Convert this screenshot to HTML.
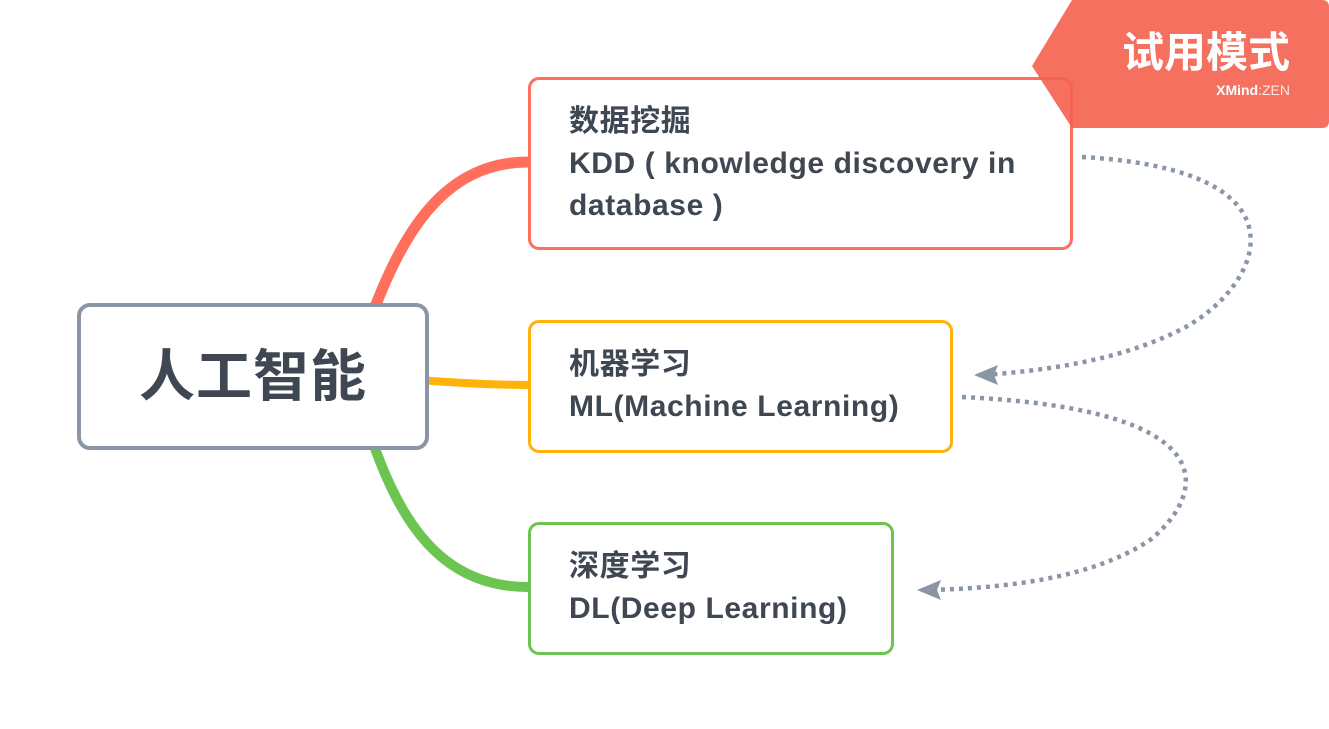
<!DOCTYPE html>
<html><head><meta charset="utf-8"><style>
body{margin:0;width:1329px;height:729px;background:#fff;position:relative;overflow:hidden;font-family:"Liberation Sans","Noto Sans CJK SC",sans-serif;}
.box{position:absolute;box-sizing:border-box;background:#fff;border-radius:11px;color:#3f4752;font-weight:bold;}
.t{position:absolute;left:38px;font-size:30px;line-height:42px;white-space:nowrap;letter-spacing:0.6px;}
</style></head><body>
<svg width="1329" height="729" style="position:absolute;left:0;top:0">
<path d="M528 162 C440 162 400 240 370 320" stroke="#ff6f5b" stroke-width="11" fill="none"/>
<path d="M528 587 C440 587 400 520 372 440" stroke="#6cc451" stroke-width="10" fill="none"/>
<path d="M420 380 C470 384 500 385 528 385" stroke="#ffb20a" stroke-width="8" fill="none"/>
<path d="M1082 157 C1320 170 1260 290 1180 330 C1120 360 1050 370 985 375" stroke="#8a95a5" stroke-width="4.5" stroke-dasharray="4 5" fill="none"/>
<polygon points="974,375 998,365 994,375 998,385" fill="#8a95a5"/>
<path d="M962 397 C1240 410 1200 500 1150 540 C1090 580 1000 588 930 590" stroke="#8a95a5" stroke-width="4.5" stroke-dasharray="4 5" fill="none"/>
<polygon points="917,590 941,580 937,590 941,600" fill="#8a95a5"/>
</svg>
<div class="box" style="left:77px;top:303px;width:352px;height:147px;border:4px solid #8a95a5;border-radius:13px;">
<div style="position:absolute;left:0;right:0;top:36px;text-align:center;font-size:56px;line-height:68px;letter-spacing:1px;">人工智能</div></div>
<div class="box" style="left:528px;top:77px;width:545px;height:173px;border:3px solid #ff6f5b;">
<div class="t" style="top:21px">数据挖掘<br>KDD ( knowledge discovery in<br>database )</div></div>
<div class="box" style="left:528px;top:320px;width:425px;height:133px;border:3px solid #ffb20a;">
<div class="t" style="top:21px">机器学习<br>ML(Machine Learning)</div></div>
<div class="box" style="left:528px;top:522px;width:366px;height:133px;border:3px solid #6cc451;">
<div class="t" style="top:21px">深度学习<br>DL(Deep Learning)</div></div>
<svg width="300" height="130" style="position:absolute;left:1030px;top:0">
<path d="M42 0 H292 Q299 0 299 7 V121 Q299 128 292 128 H42 L2 66 Z" fill="#f4614d" fill-opacity="0.9"/>
</svg>
<div style="position:absolute;left:1100px;top:27px;width:190px;text-align:right;color:#fff;font-size:42px;line-height:52px;font-weight:bold;">试用模式</div>
<div style="position:absolute;left:1150px;top:81px;width:140px;text-align:right;color:#fff;font-size:14px;line-height:18px;"><b>XMind</b>:<span style="font-weight:normal;opacity:.85">ZEN</span></div>
</body></html>
